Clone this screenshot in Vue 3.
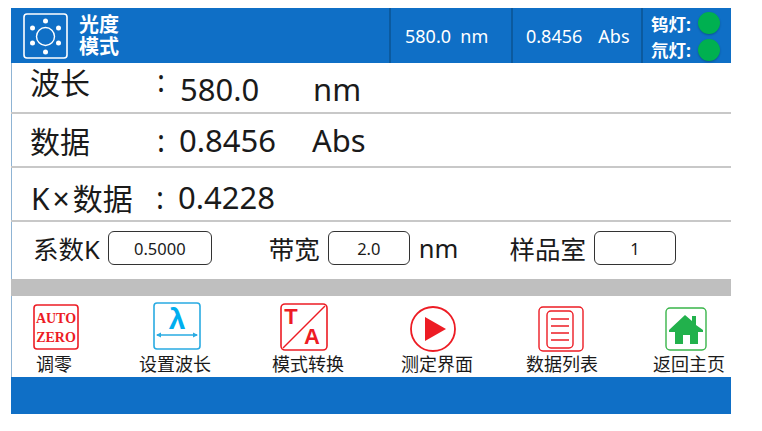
<script setup>
// dx: label offset from icon centre, lift: gap under the icon
const tools = [
  { id: 'auto', label: '调零', dx: -1, lift: 3, shift: 2 },
  { id: 'wave', label: '设置波长', dx: -2, lift: 3, shift: 0 },
  { id: 'mode', label: '模式转换', dx: 4, lift: 2, shift: 0 },
  { id: 'play', label: '测定界面', dx: 4, lift: 1, shift: -1 },
  { id: 'list', label: '数据列表', dx: 1, lift: 1, shift: 0 },
  { id: 'home', label: '返回主页', dx: 3, lift: 2, shift: 0 }
]
</script>

<template>
  <div class="panel">
    <header class="top">
      <div class="mode">
        <svg class="mode-icon" width="45" height="46" viewBox="0 0 45 46">
          <rect x="1" y="1" width="43" height="44" rx="3" fill="none" stroke="#fff" stroke-width="1.6" />
          <circle cx="22.5" cy="23.5" r="9" fill="none" stroke="#fff" stroke-width="1.4" />
          <circle cx="22.5" cy="8" r="2.5" fill="#fff" />
          <circle cx="22.5" cy="39" r="2.5" fill="#fff" />
          <circle cx="9.5" cy="15" r="2.5" fill="#fff" />
          <circle cx="35.5" cy="15" r="2.5" fill="#fff" />
          <circle cx="9.5" cy="30" r="2.5" fill="#fff" />
          <circle cx="35.5" cy="30" r="2.5" fill="#fff" />
        </svg>
        <div class="mode-text">
          <div>光度</div>
          <div>模式</div>
        </div>
      </div>
      <div class="cell cell-wave">580.0&nbsp;&nbsp;nm</div>
      <div class="cell cell-abs"><span>0.8456</span><span>Abs</span></div>
      <div class="cell cell-lamps">
        <div class="lamp"><span>钨灯:</span><i class="dot"></i></div>
        <div class="lamp"><span>氘灯:</span><i class="dot"></i></div>
      </div>
    </header>

    <div class="row row-1">
      <span class="name raised">波长</span>
      <span class="colon raised">:</span>
      <span class="val">580.0</span>
      <span class="unit">nm</span>
    </div>
    <div class="row row-2">
      <span class="name">数据</span>
      <span class="colon">:</span>
      <span class="val">0.8456</span>
      <span class="unit">Abs</span>
    </div>
    <div class="row row-3">
      <span class="name">K<span class="times">×</span>数据</span>
      <span class="colon">:</span>
      <span class="val">0.4228</span>
    </div>

    <div class="params">
      <span class="p-k">系数K</span>
      <div class="box box-k">0.5000</div>
      <span class="p-band">带宽</span>
      <div class="box">2.0</div>
      <span class="p-nm">nm</span>
      <span class="p-room">样品室</span>
      <div class="box">1</div>
    </div>

    <div class="grey"></div>

    <div class="tools">
      <div v-for="t in tools" :key="t.id" class="tool">
        <div class="tool-icon" :style="{ marginBottom: t.lift + 'px', marginLeft: t.shift + 'px' }">
          <svg v-if="t.id === 'auto'" width="46" height="46" viewBox="0 0 46 46">
            <rect x="1" y="1" width="44" height="44" rx="3" fill="none" stroke="#ed1c24" stroke-width="1.6" />
            <text x="23" y="19" class="auto-text">AUTO</text>
            <text x="23" y="38" class="auto-text">ZERO</text>
          </svg>
          <svg v-else-if="t.id === 'wave'" width="48" height="48" viewBox="0 0 48 48">
            <rect x="1" y="1" width="46" height="46" rx="3" fill="none" stroke="#29abe2" stroke-width="1.6" />
            <text x="24" y="27" class="lambda">λ</text>
            <path d="M4 33 H44" stroke="#29abe2" stroke-width="1.4" />
            <path d="M3 33 L8 30.5 V35.5 Z M45 33 L40 30.5 V35.5 Z" fill="#29abe2" />
          </svg>
          <svg v-else-if="t.id === 'mode'" width="48" height="48" viewBox="0 0 48 48">
            <rect x="1" y="1" width="46" height="46" rx="4" fill="none" stroke="#ed1c24" stroke-width="1.6" />
            <path d="M45 3 L3 45" stroke="#ed1c24" stroke-width="1.5" />
            <text x="11" y="21" class="ta">T</text>
            <text x="32" y="41" class="ta">A</text>
          </svg>
          <svg v-else-if="t.id === 'play'" width="48" height="46" viewBox="0 0 48 46">
            <circle cx="24" cy="23" r="22" fill="none" stroke="#ed1c24" stroke-width="1.8" />
            <path d="M16 11 L37 23 L16 35 Z" fill="#ed1c24" />
          </svg>
          <svg v-else-if="t.id === 'list'" width="46" height="46" viewBox="0 0 46 46">
            <rect x="1" y="1" width="44" height="44" rx="4" fill="none" stroke="#ed1c24" stroke-width="1.4" />
            <rect x="9" y="5" width="26" height="37" rx="4" fill="none" stroke="#ed1c24" stroke-width="1.4" />
            <path d="M13 13 H31 M13 20 H31 M13 27 H31 M13 34 H31" stroke="#ed1c24" stroke-width="1.3" />
          </svg>
          <svg v-else width="42" height="44" viewBox="0 0 42 44">
            <rect x="1" y="1" width="40" height="42" rx="4" fill="none" stroke="#39b54a" stroke-width="1.4" />
            <path d="M4 23 L20 8 L27 14 V9 H31 V18 L38 23 V25 H33 V37 H25 V28 H18 V37 H10 V25 H4 Z" fill="#22b14c" />
          </svg>
        </div>
        <span class="tool-label" :style="{ left: t.dx + 'px' }">{{ t.label }}</span>
      </div>
    </div>

    <footer class="bottom"></footer>
  </div>
</template>

<style scoped>
.panel {
  width: 720px;
  height: 406px;
  margin: 8px 0 0 11px;
  display: flex;
  flex-direction: column;
  background: #fff;
  box-shadow: inset 1px 0 0 #8fb4d4;
  color: #1a1a1a;
  font-family: "Noto Sans", "Noto Sans CJK SC", sans-serif;
  overflow: hidden;
}
.top {
  height: 55px;
  flex: none;
  display: flex;
  background: #0f6fc6;
  color: #fff;
}
.mode {
  width: 378px;
  display: flex;
  align-items: center;
  padding-left: 12px;
  box-sizing: border-box;
}
.mode-icon {
  flex: none;
}
.mode-text {
  margin-left: 11px;
  font-size: 20px;
  font-weight: 700;
  line-height: 22px;
}
.cell {
  display: flex;
  align-items: center;
  border-left: 2px solid #0b5a9f;
  box-sizing: border-box;
  font-size: 18px;
}
.cell-wave {
  width: 122px;
  padding-left: 14px;
}
.cell-abs {
  width: 130px;
  padding-left: 13px;
  gap: 16px;
}
.cell-lamps {
  flex: 1;
  flex-direction: column;
  align-items: flex-start;
  padding-left: 8px;
  padding-top: 2px;
}
.lamp {
  height: 28px;
  display: flex;
  align-items: center;
  gap: 7px;
  font-size: 17.5px;
  font-weight: 700;
}
.dot {
  width: 22px;
  height: 22px;
  border-radius: 50%;
  background: #00b050;
  box-shadow: 0 1px 2px rgba(0, 0, 0, 0.25);
}
.row {
  flex: none;
  display: grid;
  grid-template-columns: 127px 22px 133px auto;
  align-items: center;
  box-sizing: border-box;
  padding-left: 19px;
  font-size: 30px;
  border-bottom: 2px solid #c8c8c8;
}
.val,
.unit {
  font-size: 31px;
}
.row-1 {
  height: 51px;
}
.row-2 {
  height: 54px;
}
.row-3 {
  height: 54px;
  grid-template-columns: 125px 22px auto;
  padding-left: 20px;
}
.row-1 .raised {
  position: relative;
  top: -7px;
}
.row-1 .val,
.row-1 .unit {
  position: relative;
  top: 1px;
  left: 1px;
}
.row-3 > span {
  position: relative;
  top: 3px;
}
.times {
  margin: 0 3px;
}
.val,
.unit,
.name {
  white-space: nowrap;
}
.params {
  flex: none;
  height: 57px;
  display: flex;
  align-items: center;
  padding-left: 22px;
  font-size: 25.5px;
}
.box {
  width: 82px;
  height: 34px;
  margin-top: -5px;
  display: flex;
  align-items: center;
  justify-content: center;
  border: 1px solid #333;
  border-radius: 6px;
  box-sizing: border-box;
  font-size: 16.5px;
}
.box-k {
  width: 104px;
  margin-left: 8px;
}
.params > span {
  position: relative;
  top: -3px;
  white-space: nowrap;
}
.p-band {
  margin-left: 57px;
  margin-right: 8px;
}
.p-nm {
  margin-left: 9px;
}
.p-room {
  margin-left: 51px;
  margin-right: 8px;
}
.grey {
  flex: none;
  height: 17px;
  background: #bfbfbf;
}
.tools {
  flex: none;
  height: 81px;
  display: grid;
  grid-template-columns: 122px 127px 129px 128px 125px 80px;
  padding: 7px 0 0 4px;
  box-sizing: border-box;
}
.tool {
  width: 80px;
  height: 72px;
  display: flex;
  flex-direction: column;
  align-items: center;
  justify-content: flex-end;
}
.tool-icon {
  display: flex;
}
.tool-label {
  position: relative;
  font-size: 18px;
  line-height: 22px;
  white-space: nowrap;
}
.auto-text {
  font-family: "Liberation Serif", serif;
  font-size: 14px;
  font-weight: 700;
  fill: #ed1c24;
  text-anchor: middle;
}
.lambda {
  font-family: "Liberation Sans", sans-serif;
  font-size: 30px;
  font-weight: 700;
  fill: #00aeef;
  text-anchor: middle;
}
.ta {
  font-family: "Liberation Sans", sans-serif;
  font-size: 22px;
  font-weight: 700;
  fill: #ed1c24;
  text-anchor: middle;
}
.bottom {
  flex: 1;
  background: #0f6fc6;
}
</style>
